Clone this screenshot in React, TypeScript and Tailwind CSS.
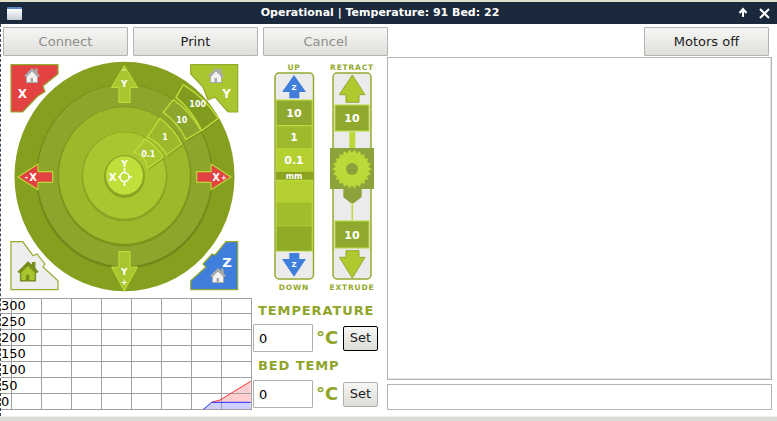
import React from 'react';

const LIME = '#bcd93a';
const OLIVE = '#93aa2c';

const gearPoints = (() => {
  const pts: string[] = [];
  const teeth = 22;
  for (let i = 0; i < teeth * 2; i++) {
    const r = i % 2 === 0 ? 19.5 : 16.5;
    const a = (i / (teeth * 2)) * Math.PI * 2;
    pts.push(`${(352 + r * Math.cos(a)).toFixed(1)},${(170 + r * Math.sin(a)).toFixed(1)}`);
  }
  return pts.join(' ');
})();

const House: React.FC<{ x: number; y: number; body: string; roof: string; s?: number }> = ({ x, y, body, roof, s = 1 }) => (
  <g transform={`translate(${x} ${y}) scale(${s})`}>
    <path d="M-8 0 L0 -8 L3 -5.5 L3 -7.5 L5.5 -7.5 L5.5 -3 L8 0 L6 1 L6 7 L-6 7 L-6 1 Z" fill={roof} />
    <path d="M-5 0.5 L0 -4.5 L5 0.5 L5 6 L-5 6 Z" fill={body} />
    <rect x="-1.5" y="2" width="2.5" height="4" fill={roof} />
  </g>
);

const Label: React.FC<{ x: number; y: number; size?: number; fill?: string; spacing?: number; children: React.ReactNode }> = ({ x, y, size = 8, fill = '#fff', spacing = 0, children }) => (
  <text x={x} y={y} textAnchor="middle" fontSize={size} fontWeight="700" fill={fill} letterSpacing={spacing} fontFamily="'DejaVu Sans', sans-serif">
    {children}
  </text>
);

const Wedge: React.FC<{ d: string; fill: string }> = ({ d, fill }) => (
  <g>
    <path d={d} fill="#5f7715" opacity="0.5" transform="translate(1 1.5)" />
    <path d={d} fill={fill} stroke={LIME} strokeWidth="1.5" strokeLinejoin="round" />
  </g>
);

const JogDial = () => (
  <svg width="252" height="241" viewBox="1 58 252 241" className="block shrink-0">
    <g transform="translate(124.5 177.5) scale(1 1.043)">
      <circle r="110" fill="#85a01f" />
      <circle r="88.5" fill="#71891a" />
      <circle r="87" cy="-1" fill="#8ba62a" />
      <circle r="67" fill="#7a941c" />
      <circle r="65.5" cy="-1" fill="#9cb92b" />
      <circle r="43" fill="#8aa524" />
      <circle r="41.5" cy="-1" fill="#a7c62f" />
      <circle r="20.5" fill="#8aa524" />
      <circle r="18.5" cy="-1" fill="#c0df3a" />
    </g>

    <Wedge d="M183.3 85.7 A110 114 0 0 1 218.3 119.3 L201.7 131.7 A88 92 0 0 0 176 98.3 Z" fill="#809b1e" />
    <Wedge d="M173.3 100.7 A88 92 0 0 1 201 131.7 L186 140.7 A66 69 0 0 0 163.3 113.3 Z" fill="#8ba62a" />
    <Wedge d="M160 119.3 A66 69 0 0 1 181.7 145 L166.7 156 A42 44 0 0 0 147.3 138.3 Z" fill="#9cb92b" />
    <Wedge d="M145 140 A42 44 0 0 1 163 158.3 L147.7 169.3 A20 21 0 0 0 134 153.3 Z" fill="#a7c62f" />
    <Label x={197.7} y={108}>100</Label>
    <Label x={181.7} y={124}>10</Label>
    <Label x={165} y={141}>1</Label>
    <Label x={148.3} y={158}>0.1</Label>

    {/* home corners */}
    <path d="M11 65.7 H58 V75 L43 87 L45 92.7 L38 97 L35 100 L22.7 113 H11 Z" fill="#e24242" stroke={OLIVE} strokeWidth="1.2" />
    <House x={32} y={77} body="#f2f2f2" roof="#a9a9a9" />
    <Label x={22.5} y={99} size={12}>X</Label>
    <path d="M190.7 65.7 H237.7 V113 H228 L215 98 L208 101 L203 88 L190.7 75 Z" fill="#a9c62f" stroke={OLIVE} strokeWidth="1.2" />
    <House x={216} y={77} body="#f2f2f2" roof="#a9a9a9" />
    <Label x={226.5} y={99} size={12}>Y</Label>
    <path d="M11 242.7 H22.7 L33 256.7 L37 255 L45 265 L43 268 L58 281.7 V290.7 H11 Z" fill="#eeeeee" stroke={OLIVE} strokeWidth="1.2" />
    <House x={28} y={273} body="#a9c62f" roof="#748d1c" s={1.35} />
    <path d="M237.7 242.7 H226 L215 256 L212 255 L203 265 L206 268 L190.7 281.7 V290.7 H237.7 Z" fill="#3f7edb" stroke={OLIVE} strokeWidth="1.2" />
    <House x={218} y={277} body="#f2f2f2" roof="#a9a9a9" />
    <Label x={227} y={268} size={13}>Z</Label>

    {/* axis arrows */}
    <path d="M124.3 66.7 L137.3 88.3 H130 V103.3 H119 V88.3 H111.7 Z" fill="#a7c62f" stroke={LIME} strokeWidth="1.2" strokeLinejoin="round" />
    <Label x={124.3} y={73} size={7}>-</Label>
    <Label x={124.3} y={88} size={9}>Y</Label>
    <path d="M124.3 291.7 L137.3 268 H130 V252.7 H119 V268 H111.7 Z" fill="#a7c62f" stroke={LIME} strokeWidth="1.2" strokeLinejoin="round" />
    <Label x={124.3} y={276} size={9}>Y</Label>
    <Label x={124.3} y={286} size={8}>+</Label>
    <path d="M18 178 L38 165 V172.7 H52.7 V183.3 H38 V190.7 Z" fill="#e24242" stroke={LIME} strokeWidth="1.2" strokeLinejoin="round" />
    <Label x={33} y={182} size={10}>X</Label>
    <Label x={26.5} y={181} size={8}>-</Label>
    <path d="M231 178 L211 165 V172.7 H196.7 V183.3 H211 V190.7 Z" fill="#e24242" stroke={LIME} strokeWidth="1.2" strokeLinejoin="round" />
    <Label x={216} y={182} size={10}>X</Label>
    <Label x={224} y={181} size={7}>+</Label>

    {/* centre cross */}
    <circle cx="124.5" cy="178" r="4.5" fill="none" stroke="#fff" strokeWidth="1.6" />
    <path d="M124.5 169 V173.5 M124.5 182.5 V187 M118 178 H120 M129 178 H132" stroke="#fff" strokeWidth="1.6" />
    <Label x={124.5} y={168} size={9}>Y</Label>
    <Label x={112.5} y={182} size={10}>X</Label>
  </svg>
);

const TempGraph = () => {
  const rows = [299.5, 314.5, 330.5, 346.5, 362.5, 378.5, 394.5, 410.5];
  const cols = [11.5, 41.5, 71.5, 101.5, 131.5, 161.5, 191.5, 221.5, 251.5];
  const labels = [['300', 311], ['250', 327], ['200', 343], ['150', 359], ['100', 375], ['50', 391], ['0', 407]] as const;
  return (
    <svg width="252" height="114" viewBox="1 299 252 114" className="block shrink-0">
      <path d="M211.7 403.3 L220 401 L250.7 382.3 V403.3 Z" fill="#ffcfcf" />
      <path d="M203.3 410.5 L211.7 403.3 H250.7 V410.5 Z" fill="#cfcfff" />
      {rows.map((y) => (
        <line key={y} x1="1" x2="252" y1={y} y2={y} stroke="#a0a0a0" />
      ))}
      {cols.map((x) => (
        <line key={x} x1={x} x2={x} y1="299" y2="411" stroke="#a0a0a0" />
      ))}
      {labels.map(([t, y]) => (
        <text key={t} x="1" y={y} fontSize="13" fill="#000" fontFamily="'DejaVu Sans', sans-serif">{t}</text>
      ))}
      <path d="M211.7 403.3 L220 401 L250.7 382.3" fill="none" stroke="#ff3030" />
      <path d="M203.3 410.5 L211.7 403.3 H250.7" fill="none" stroke="#2030ff" />
    </svg>
  );
};

const AxisControls = () => (
  <svg width="134" height="241" viewBox="253 58 134 241" className="block shrink-0">
    <Label x={294} y={71} size={7.5} fill={OLIVE} spacing={0.8}>UP</Label>
    <Label x={352} y={71} size={7.5} fill={OLIVE} spacing={0.8}>RETRACT</Label>
    <Label x={294} y={291} size={7.5} fill={OLIVE} spacing={0.8}>DOWN</Label>
    <Label x={352} y={291} size={7.5} fill={OLIVE} spacing={0.8}>EXTRUDE</Label>

    {/* Z column */}
    <rect x="275" y="74" width="38.5" height="206" rx="4" fill="#ebebeb" stroke={OLIVE} strokeWidth="1.5" />
    <path d="M294 76 L306 93 H299.3 V99.3 H289.3 V93 H282 Z" fill="#3f7edb" />
    <Label x={294} y={91} size={7}>Z</Label>
    <rect x="276" y="100.5" width="37" height="152" fill={LIME} />
    <rect x="276.7" y="101.7" width="35" height="24.3" fill="#8fa92e" />
    <rect x="276.7" y="127.3" width="35" height="22" fill="#9eba2c" />
    <rect x="276.7" y="150.7" width="35" height="21" fill="#b3cf30" />
    <rect x="276" y="172.7" width="37" height="8" fill="#8ba31f" />
    <rect x="276.7" y="182.3" width="35" height="20.4" fill="#b3cf30" />
    <rect x="276.7" y="203.3" width="35" height="23.4" fill="#a1bd2c" />
    <rect x="276.7" y="227.3" width="35" height="24.4" fill="#90ab28" />
    <Label x={294} y={118} size={11}>10</Label>
    <Label x={294} y={142} size={11}>1</Label>
    <Label x={294} y={165} size={11}>0.1</Label>
    <Label x={294} y={180} size={8}>mm</Label>
    <path d="M289.3 254 H299.3 V260 H306 L294 277.7 L282 260 H289.3 Z" fill="#3f7edb" />
    <Label x={294} y={268} size={7}>Z</Label>

    {/* extruder column */}
    <rect x="333" y="74" width="38" height="206" rx="4" fill="#ebebeb" stroke={OLIVE} strokeWidth="1.5" />
    <path d="M352.3 76 L365 95.7 H359 V103.3 H346 V95.7 H339.3 Z" fill="#aeca2f" stroke={OLIVE} strokeWidth="1" strokeLinejoin="round" />
    <rect x="335" y="106" width="34" height="26" fill="#8fa92e" stroke={LIME} />
    <Label x={352} y={123} size={11}>10</Label>
    <rect x="349.3" y="133" width="6" height="17" fill={LIME} />
    <path d="M330 149 H374 V190 H361.7 V198 L354 204 H350.5 L343.3 198 V190 H330 Z" fill="#8ba33a" />
    <polygon points={gearPoints} fill={LIME} />
    <circle cx="352" cy="170" r="6" fill="#8ba33a" />
    <rect x="351.5" y="204" width="1.5" height="17" fill={LIME} />
    <rect x="335" y="222" width="34" height="27" fill="#8fa92e" stroke={LIME} />
    <Label x={352} y={240} size={11}>10</Label>
    <path d="M346 251.7 H359 V258.3 H365 L352.3 279 L339.3 258.3 H346 Z" fill="#aeca2f" stroke={OLIVE} strokeWidth="1" strokeLinejoin="round" />
  </svg>
);

const ToolButton: React.FC<{ disabled?: boolean; className?: string; children: React.ReactNode }> = ({ disabled, className = '', children }) => (
  <button
    disabled={disabled}
    className={`h-[29px] w-[125px] shrink-0 rounded-[1px] border border-[#b4b4ae] bg-gradient-to-b from-[#f6f6f4] to-[#dfdfdc] text-[13px] ${disabled ? 'text-[#8e8e8c]' : 'text-[#1c1c1c]'} ${className}`}
  >
    {children}
  </button>
);

const TempRow: React.FC<{ focused?: boolean }> = ({ focused }) => (
  <div className="flex items-center">
    <input
      readOnly
      value="0"
      className="h-[28px] w-[60px] rounded-[1px] border border-[#b0b0aa] bg-white px-[5px] text-[13px] text-black outline-none"
    />
    <span className="ml-[3px] w-[27px] text-[18px] leading-none font-bold text-[#8fa52a]">°C</span>
    <button
      className={`h-[25px] w-[35px] rounded-[2px] border bg-gradient-to-b from-[#f6f6f4] to-[#dcdcd8] text-[13px] text-[#1c1c1c] ${focused ? 'border-black' : 'border-[#b0b0aa]'}`}
    >
      Set
    </button>
  </div>
);

export default function App() {
  return (
    <div className="flex h-[421px] w-[777px] flex-col overflow-hidden bg-white font-['DejaVu_Sans',sans-serif]">
      <div className="h-[2px] shrink-0 bg-[#dfe1c9]" />
      <div className="flex h-[22px] shrink-0 items-center bg-[#1a2a3c] pr-[7px] pl-[7px]">
        <div className="h-[13px] w-[15px] rounded-[1px] border-t-2 border-[#5b86c4] bg-gradient-to-b from-white to-[#c6ccd4]" />
        <div className="flex-1 text-center text-[11px] font-bold text-white">Operational | Temperature: 91 Bed: 22</div>
        <svg width="32" height="12" viewBox="0 0 32 12" className="block">
          <path d="M5 10 V4 M1.5 6 L5 2 L8.5 6" fill="none" stroke="#fff" strokeWidth="2" />
          <path d="M22 2 L31 11 M31 2 L22 11" fill="none" stroke="#fff" strokeWidth="2" />
        </svg>
      </div>

      <div className="flex min-h-0 flex-1 flex-col border-l border-dashed border-[#3a4a5c] pt-[3px]">
        <div className="flex shrink-0 gap-[5px] pl-[2px]">
          <ToolButton disabled>Connect</ToolButton>
          <ToolButton>Print</ToolButton>
          <ToolButton disabled>Cancel</ToolButton>
          <ToolButton className="mr-[8px] ml-auto">Motors off</ToolButton>
        </div>

        <div className="flex min-h-0 flex-1 pt-[1px]">
          <div className="flex w-[252px] shrink-0 flex-col">
            <JogDial />
            <TempGraph />
          </div>
          <div className="flex w-[134px] shrink-0 flex-col">
            <AxisControls />
            <div className="mt-[5px] pl-[5px] text-[13px] leading-[16px] font-bold tracking-[0.9px] text-[#8fa52a]">TEMPERATURE</div>
            <div className="mt-[5px]">
              <TempRow focused />
            </div>
            <div className="mt-[6px] pl-[5px] text-[13px] leading-[16px] font-bold tracking-[0.9px] text-[#8fa52a]">BED TEMP</div>
            <div className="mt-[6px]">
              <TempRow />
            </div>
          </div>
          <div className="flex flex-1 flex-col gap-[4px] pr-[5px]">
            <div className="h-[323px] border border-[#b4b4ae] bg-white shadow-[inset_-1px_-1px_0_#e8e8e2]" />
            <input readOnly className="h-[26px] w-full border border-[#b4b4ae] bg-white outline-none" />
          </div>
        </div>
      </div>
      <div className="h-[5px] shrink-0 border-t border-[#eeeeea] bg-[#dcdcd8]" />
    </div>
  );
}
